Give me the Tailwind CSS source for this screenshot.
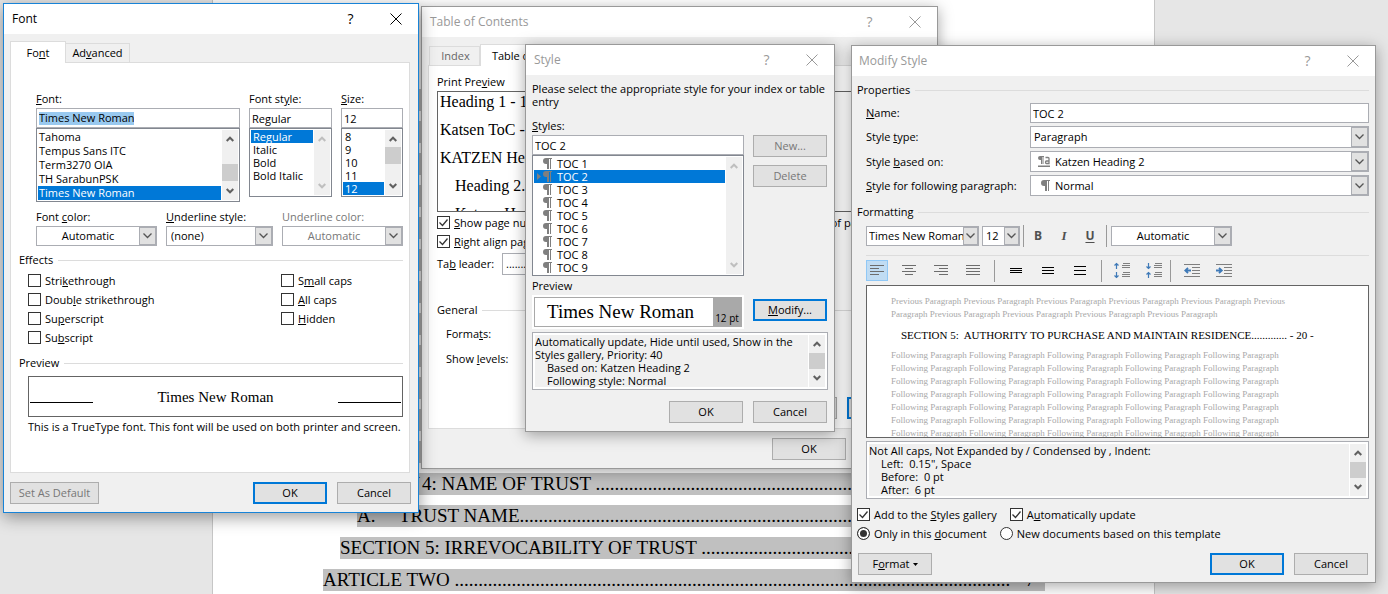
<!DOCTYPE html>
<html lang="en">
<head>
  <meta charset="UTF-8" />
  <meta name="viewport" content="width=device-width, initial-scale=1.0"/>
  <title>Table of Contents - Modify Style</title>
  <script src="https://cdn.jsdelivr.net/npm/@tailwindcss/browser@4"></script>
</head>
<body class="relative h-screen overflow-hidden bg-[#e6e6e6] font-['Open_Sans','Noto_Sans',sans-serif] text-[11px] leading-4 text-black">

  <!-- Shared icons -->
  <svg class="hidden">
    <symbol id="close" viewBox="0 0 12 12"><path d="M.5.5l11 11M11.5.5l-11 11" fill="none" stroke="currentColor"/></symbol>
    <symbol id="down" viewBox="0 0 9 6"><path d="M.5.5l4 4 4-4" fill="none" stroke="#555" stroke-width="1.3"/></symbol>
    <symbol id="sb-up" viewBox="0 0 8 6"><path d="M.7 5L4 1.700 7.300 5" fill="none" stroke="currentColor" stroke-width="2"/></symbol>
    <symbol id="sb-down" viewBox="0 0 8 6"><path d="M.7 1L4 4.300 7.300 1" fill="none" stroke="currentColor" stroke-width="2"/></symbol>
    <symbol id="check" viewBox="0 0 13 13"><path d="M2.500 6.500l3 3 5-6" fill="none" stroke="#333" stroke-width="1.300"/></symbol>
    <symbol id="para" viewBox="0 0 9 11"><path d="M3 0h6v1H8v10H7V1H6v10H4V6H3a3 3 0 0 1 0-6z" fill="#7f7f7f"/></symbol>
  </svg>

  <!-- Document -->
  <main class="ml-[212px] mr-[233px] h-screen overflow-hidden border-x border-[#c6c6c6] bg-white pl-[110px] pr-[109px] pt-[89px] font-['Liberation_Serif',serif] text-[19px] leading-[22px] whitespace-nowrap">
    <div class="flex flex-col gap-2.5 *:h-[22px] *:shrink-0 *:bg-[#c0c0c0]">
      <p></p><p></p><p></p><p></p><p></p><p></p><p></p><p></p><p></p><p></p><p></p><p></p>
      <p class="ml-[17px] flex"><span class="w-[82px]">SECTION</span><span>4: NAME OF TRUST .......................................................................................</span></p>
      <p class="ml-[34px] flex"><span class="w-[42px]">A.</span><span>TRUST NAME.......................................................................................................</span></p>
      <p class="ml-[17px]">SECTION 5: IRREVOCABILITY OF TRUST .................................................................</p>
      <p class="flex justify-between"><span>ARTICLE TWO .....................................................................................................................</span><span class="pr-2.5">7</span></p>
    </div>
  </main>

  <!-- Table of Contents dialog -->
  <section class="absolute left-[421px] top-[6px] w-[517px] border border-[#999] bg-[#f0f0f0] shadow-[0_3px_14px_rgba(0,0,0,0.35)]">
    <header class="flex h-[30px] items-center bg-white pl-2 text-xs text-[#999]">
      <h2 class="grow">Table of Contents</h2>
      <button class="w-[45px] text-sm">?</button>
      <button class="flex w-[45px] justify-center"><svg class="size-3"><use href="#close"/></svg></button>
    </header>
    <div class="px-1.5 pb-2 pt-[7px]">
      <div class="flex h-[21px] items-end">
        <button class="ml-px h-[19px] w-[51px] border border-b-0 border-[#dcdcdc] pl-0.5 text-[#666]">Index</button>
        <button class="relative -mb-px h-[22px] w-[114px] border border-b-0 border-[#dcdcdc] bg-white">Table of <u>C</u>ontents</button>
      </div>
      <div class="mr-0.5 border border-[#dcdcdc] bg-white pb-[9px] pl-2 pt-2">
        <div class="grid grid-cols-[248px_1fr] gap-x-2.5">
          <div>
            <p>Print Pre<u>v</u>iew</p>
            <div class="mt-px h-[121px] overflow-hidden border border-[#646464] pl-0.5 font-['Liberation_Serif',serif] text-base leading-7 whitespace-nowrap">
              <p class="-mt-1">Heading 1 - 1</p>
              <p>Katsen ToC - 1</p>
              <p>KATZEN Heading 1</p>
              <p class="pl-[15px]">Heading 2.......3</p>
              <p class="pl-[15px]">Katzen Heading 2</p>
            </div>
            <label class="mt-px flex h-[19px] items-center gap-1">
              <span class="grid"><input type="checkbox" checked class="col-start-1 row-start-1 size-[13px] appearance-none border border-[#333] bg-white"><svg class="col-start-1 row-start-1 size-[13px]"><use href="#check"/></svg></span>
              <span><u>S</u>how page numbers</span>
            </label>
            <label class="flex h-[19px] items-center gap-1">
              <span class="grid"><input type="checkbox" checked class="col-start-1 row-start-1 size-[13px] appearance-none border border-[#333] bg-white"><svg class="col-start-1 row-start-1 size-[13px]"><use href="#check"/></svg></span>
              <span><u>R</u>ight align page numbers</span>
            </label>
            <div class="mt-0.5 flex items-center">
              <label for="leader" class="w-[65px]">Ta<u>b</u> leader:</label>
              <select id="leader" class="h-[22px] w-[90px] appearance-none border border-[#abadb3] bg-white px-[3px]"><option>.......</option></select>
            </div>
          </div>
          <div>
            <p><u>W</u>eb Preview</p>
            <div class="mt-px h-[121px] border border-[#646464]"></div>
            <label class="mt-px flex h-[19px] items-center gap-1 whitespace-nowrap">
              <span class="grid"><input type="checkbox" checked class="col-start-1 row-start-1 size-[13px] appearance-none border border-[#333] bg-white"><svg class="col-start-1 row-start-1 size-[13px]"><use href="#check"/></svg></span>
              <span>Use <u>h</u>yperlinks instead of page numbers</span>
            </label>
          </div>
        </div>
        <div class="mt-[27px] flex items-center gap-[5px] pr-1.5"><h3>General</h3><hr class="grow border-[#dcdcdc]"></div>
        <p class="mt-2 pl-[9px]">Forma<u>t</u>s:</p>
        <p class="mt-[9px] pl-[9px]">Show <u>l</u>evels:</p>
        <div class="mt-[30px] flex justify-end gap-2.5 pr-[7px]">
          <button class="h-[22px] w-[74px] border border-[#adadad] bg-[#e1e1e1]"><u>O</u>ptions...</button>
          <button class="h-[22px] w-[74px] border-2 border-[#0078d7] bg-[#e1e1e1]"><u>M</u>odify...</button>
        </div>
      </div>
      <div class="mt-[9px] flex justify-end gap-2.5 pr-px">
        <button class="h-[22px] w-[74px] border border-[#adadad] bg-[#e1e1e1]">OK</button>
        <button class="h-[22px] w-[74px] border border-[#adadad] bg-[#e1e1e1]">Cancel</button>
      </div>
    </div>
  </section>

  <!-- Style dialog -->
  <section class="absolute left-[525px] top-[44px] w-[310px] border border-[#999] bg-[#f0f0f0] shadow-[0_3px_14px_rgba(0,0,0,0.35)]">
    <header class="flex h-[30px] items-center bg-white pl-2 text-xs text-[#999]">
      <h2 class="grow">Style</h2>
      <button class="w-[45px] text-sm">?</button>
      <button class="flex w-[45px] justify-center"><svg class="size-3"><use href="#close"/></svg></button>
    </header>
    <div class="px-1.5 pb-2 pt-[7px]">
      <p class="leading-[13px]">Please select the appropriate style for your index or table<br>entry</p>
      <label for="styles" class="mt-2.5 block"><u>S</u>tyles:</label>
      <div class="mt-px flex gap-[9px]">
        <div class="w-[212px]">
          <input id="styles" type="text" value="TOC 2" class="block h-5 w-full border border-[#abadb3] bg-white px-0.5">
          <div class="flex border border-[#828790] bg-white p-px leading-[13px]">
            <ul class="grow">
              <li class="flex items-center pl-[9px]"><svg class="mr-[5px] h-[11px] w-[9px]"><use href="#para"/></svg>TOC 1</li>
              <li class="flex items-center bg-[#0078d7] pl-[3px] text-white"><svg class="h-[7px] w-[6px]" viewBox="0 0 6 7"><path d="M0 0l4 3.500L0 7z" fill="#7f7f7f"/></svg><svg class="mr-[5px] h-[11px] w-[9px]"><use href="#para"/></svg>TOC 2</li>
              <li class="flex items-center pl-[9px]"><svg class="mr-[5px] h-[11px] w-[9px]"><use href="#para"/></svg>TOC 3</li>
              <li class="flex items-center pl-[9px]"><svg class="mr-[5px] h-[11px] w-[9px]"><use href="#para"/></svg>TOC 4</li>
              <li class="flex items-center pl-[9px]"><svg class="mr-[5px] h-[11px] w-[9px]"><use href="#para"/></svg>TOC 5</li>
              <li class="flex items-center pl-[9px]"><svg class="mr-[5px] h-[11px] w-[9px]"><use href="#para"/></svg>TOC 6</li>
              <li class="flex items-center pl-[9px]"><svg class="mr-[5px] h-[11px] w-[9px]"><use href="#para"/></svg>TOC 7</li>
              <li class="flex items-center pl-[9px]"><svg class="mr-[5px] h-[11px] w-[9px]"><use href="#para"/></svg>TOC 8</li>
              <li class="flex items-center pl-[9px]"><svg class="mr-[5px] h-[11px] w-[9px]"><use href="#para"/></svg>TOC 9</li>
            </ul>
            <div class="ml-px flex w-4 flex-col items-center justify-between bg-[#f0f0f0] py-1.5 text-[#bfbfbf]">
              <svg class="h-1.5 w-2"><use href="#sb-up"/></svg>
              <svg class="h-1.5 w-2"><use href="#sb-down"/></svg>
            </div>
          </div>
        </div>
        <div class="flex flex-col gap-2">
          <button disabled class="h-[22px] w-[74px] border border-[#adadad] bg-[#e1e1e1] text-[#777]">New...</button>
          <button disabled class="h-[22px] w-[74px] border border-[#adadad] bg-[#e1e1e1] text-[#777]">Delete</button>
        </div>
      </div>
      <p class="mt-0.5">Preview</p>
      <div class="mt-px flex items-center gap-[9px]">
        <div class="w-[212px] bg-white p-0.5">
          <div class="flex h-[30px] border border-[#a9a9a9]">
            <span class="grow pl-3 font-['Liberation_Serif',serif] text-[19px] leading-7">Times New Roman</span>
            <span class="w-7 bg-[#a9a9a9] pt-3 text-center text-[10px]">12 pt</span>
          </div>
        </div>
        <button class="mb-1 h-[22px] w-[74px] border-2 border-[#0078d7] bg-[#e1e1e1]"><u>M</u>odify...</button>
      </div>
      <div class="mt-[3px] flex border border-[#abadb3] bg-white p-0.5 leading-[13px]">
        <div class="h-[52px] grow bg-[#f0f0f0] whitespace-nowrap">
          <p>Automatically update, Hide until used, Show in the</p>
          <p>Styles gallery, Priority: 40</p>
          <p class="pl-3">Based on: Katzen Heading 2</p>
          <p class="pl-3">Following style: Normal</p>
        </div>
        <div class="ml-px flex w-4 flex-col items-center bg-[#f0f0f0] py-1.5 text-[#606060]">
          <svg class="h-1.5 w-2 shrink-0"><use href="#sb-up"/></svg>
          <div class="my-1.5 grow self-stretch bg-[#cdcdcd]"></div>
          <svg class="h-1.5 w-2 shrink-0"><use href="#sb-down"/></svg>
        </div>
      </div>
      <div class="mt-[11px] flex justify-end gap-2.5 pr-px">
        <button class="h-[22px] w-[74px] border border-[#adadad] bg-[#e1e1e1]">OK</button>
        <button class="h-[22px] w-[74px] border border-[#adadad] bg-[#e1e1e1]">Cancel</button>
      </div>
    </div>
  </section>

  <!-- Modify Style dialog -->
  <section class="absolute left-[851px] top-[45px] w-[525px] border border-[#999] bg-[#f0f0f0] shadow-[0_3px_14px_rgba(0,0,0,0.35)]">
    <header class="flex h-[30px] items-center bg-white pl-[7px] text-xs text-[#999]">
      <h2 class="grow">Modify Style</h2>
      <button class="w-[45px] text-sm">?</button>
      <button class="flex w-[45px] justify-center"><svg class="size-3"><use href="#close"/></svg></button>
    </header>
    <div class="pb-[7px] pl-[5px] pr-1.5 pt-1.5">
      <div class="flex items-center gap-[5px]"><h3>Properties</h3><hr class="grow border-[#dcdcdc]"></div>
      <div class="mt-[5px] grid grid-cols-[164px_1fr] items-center gap-y-[3px] pl-[9px]">
        <label for="name"><u>N</u>ame:</label>
        <input id="name" type="text" value="TOC 2" class="h-5 border border-[#abadb3] bg-white px-0.5">
        <label for="type">Style <u>t</u>ype:</label>
        <div class="flex h-[22px] border border-[#abadb3] bg-white">
          <select id="type" class="grow appearance-none px-[3px]"><option>Paragraph</option></select>
          <span class="flex w-[17px] items-center justify-center border border-[#abadb3] bg-[#e1e1e1]"><svg class="h-1.5 w-[9px]"><use href="#down"/></svg></span>
        </div>
        <label for="based">Style <u>b</u>ased on:</label>
        <div class="flex h-[21px] items-center border border-[#abadb3] bg-white pl-[7px]">
          <svg class="h-[11px] w-3" viewBox="0 0 12 11"><path d="M2 0h4v1H5.500v7h-1V1h-.500v7H3V4H2a2 2 0 0 1 0-4zM0 9.500h12V11H0z" fill="#7f7f7f"/><path d="M7.500 1.500h2.500q1 0 1 1V7.500H8.500q-1 0-1-1.200t1-1.300H11" fill="none" stroke="#7f7f7f" stroke-width="1.300"/></svg>
          <select id="based" class="h-full grow appearance-none pl-[5px]"><option>Katzen Heading 2</option></select>
          <span class="flex h-full w-[17px] items-center justify-center border border-[#abadb3] bg-[#e1e1e1]"><svg class="h-1.5 w-[9px]"><use href="#down"/></svg></span>
        </div>
        <label for="following"><u>S</u>tyle for following paragraph:</label>
        <div class="flex h-[21px] items-center border border-[#abadb3] bg-white pl-2.5">
          <svg class="h-[11px] w-[9px]"><use href="#para"/></svg>
          <select id="following" class="h-full grow appearance-none pl-[5px]"><option>Normal</option></select>
          <span class="flex h-full w-[17px] items-center justify-center border border-[#abadb3] bg-[#e1e1e1]"><svg class="h-1.5 w-[9px]"><use href="#down"/></svg></span>
        </div>
      </div>

      <div class="mt-2 flex items-center gap-[5px]"><h3>Formatting</h3><hr class="grow border-[#dcdcdc]"></div>
      <div class="mt-[5px] pl-[9px]">
        <div class="flex h-[22px] items-center">
          <div class="flex h-5 w-[113px] border border-[#abadb3] bg-white">
            <select aria-label="Font" class="w-0 grow appearance-none pl-0.5"><option>Times New Roman</option></select>
            <span class="flex w-[15px] shrink-0 items-center justify-center border border-[#abadb3] bg-[#e1e1e1]"><svg class="h-1.5 w-[9px]"><use href="#down"/></svg></span>
          </div>
          <div class="ml-[3px] flex h-5 w-[38px] border border-[#abadb3] bg-white">
            <select aria-label="Font size" class="w-0 grow appearance-none pl-[3px]"><option>12</option></select>
            <span class="flex w-[15px] shrink-0 items-center justify-center border border-[#abadb3] bg-[#e1e1e1]"><svg class="h-1.5 w-[9px]"><use href="#down"/></svg></span>
          </div>
          <div class="ml-[3px] h-full w-px bg-[#999]"></div>
          <div class="ml-px flex text-xs font-bold text-[#505050]">
            <button class="w-[26px]">B</button>
            <button class="w-[26px] font-['Liberation_Serif',serif] text-[13px] italic">I</button>
            <button class="w-[26px] underline underline-offset-2">U</button>
          </div>
          <div class="ml-[3px] h-full w-px bg-[#999]"></div>
          <div class="ml-1 flex h-5 w-[121px] border border-[#abadb3] bg-white">
            <select aria-label="Font color" class="grow appearance-none text-center"><option>Automatic</option></select>
            <span class="flex w-[17px] items-center justify-center border border-[#abadb3] bg-[#e1e1e1]"><svg class="h-1.5 w-[9px]"><use href="#down"/></svg></span>
          </div>
        </div>
        <hr class="mt-2 border-[#dcdcdc]">
        <div class="mt-1 flex h-[21px] items-center">
          <div class="flex gap-2.5">
            <button aria-label="Align left" class="flex h-[21px] w-[22px] items-center justify-center border border-[#90c8f6] bg-[#c0dcf3]"><svg class="h-[11px] w-[14px]" viewBox="0 0 14 11"><path d="M0 .5h14M0 3.500h9M0 6.500h14M0 9.500h9" stroke="#6d6d6d"/></svg></button>
            <button aria-label="Center" class="flex h-[21px] w-[22px] items-center justify-center"><svg class="h-[11px] w-[14px]" viewBox="0 0 14 11"><path d="M0 .5h14M3 3.500h8M0 6.500h14M3 9.500h8" stroke="#6d6d6d"/></svg></button>
            <button aria-label="Align right" class="flex h-[21px] w-[22px] items-center justify-center"><svg class="h-[11px] w-[14px]" viewBox="0 0 14 11"><path d="M0 .5h14M5 3.500h9M0 6.500h14M5 9.500h9" stroke="#6d6d6d"/></svg></button>
            <button aria-label="Justify" class="flex h-[21px] w-[22px] items-center justify-center"><svg class="h-[11px] w-[14px]" viewBox="0 0 14 11"><path d="M0 .5h14M0 3.500h14M0 6.500h14M0 9.500h14" stroke="#6d6d6d"/></svg></button>
          </div>
          <div class="ml-2.5 h-[22px] w-px bg-[#999]"></div>
          <div class="ml-2.5 flex gap-2.5">
            <button aria-label="Single spacing" class="flex h-[21px] w-[22px] items-center justify-center"><svg class="h-[11px] w-3" viewBox="0 0 12 11"><path d="M0 3.500h12M0 5.500h12M0 7.500h12" stroke="#000"/></svg></button>
            <button aria-label="1.5 spacing" class="flex h-[21px] w-[22px] items-center justify-center"><svg class="h-[11px] w-3" viewBox="0 0 12 11"><path d="M0 2.500h12M0 5.500h12M0 8.500h12" stroke="#000"/></svg></button>
            <button aria-label="Double spacing" class="flex h-[21px] w-[22px] items-center justify-center"><svg class="h-[11px] w-3" viewBox="0 0 12 11"><path d="M0 1.500h12M0 5.500h12M0 9.500h12" stroke="#000"/></svg></button>
          </div>
          <div class="ml-2.5 h-[22px] w-px bg-[#999]"></div>
          <div class="ml-[9px] flex gap-2.5">
            <button aria-label="Increase paragraph spacing" class="flex h-[21px] w-[22px] items-center justify-center"><svg class="h-[17px] w-4" viewBox="0 0 16 17"><path d="M9 1.500h7M8 3.500h8M8 5.500h8M9 10.500h7M8 12.500h8M8 14.500h8" stroke="#7f7f7f"/><path d="M2.500 7V1M.5 3.500l2-2 2 2M2.500 10v6M.5 13.500l2 2 2-2" fill="none" stroke="#3f7ab8" stroke-width="1.200"/></svg></button>
            <button aria-label="Decrease paragraph spacing" class="flex h-[21px] w-[22px] items-center justify-center"><svg class="h-[17px] w-4" viewBox="0 0 16 17"><path d="M9 1.500h7M8 3.500h8M8 5.500h8M9 10.500h7M8 12.500h8M8 14.500h8" stroke="#7f7f7f"/><path d="M2.500 1v6M.5 4.500l2 2 2-2M2.500 16v-6M.5 12.500l2-2 2 2" fill="none" stroke="#3f7ab8" stroke-width="1.200"/></svg></button>
          </div>
          <div class="ml-[5px] h-[22px] w-px bg-[#999]"></div>
          <div class="ml-2.5 flex gap-2.5">
            <button aria-label="Decrease indent" class="flex h-[21px] w-[22px] items-center justify-center"><svg class="h-[13px] w-4" viewBox="0 0 16 13"><path d="M0 .5h16M8 3.500h8M8 6.500h8M8 9.500h8M0 12.500h16" stroke="#7f7f7f"/><path d="M7 6.500H1.500M4 3.800L1.200 6.500 4 9.200" fill="none" stroke="#3f7ab8" stroke-width="1.800"/></svg></button>
            <button aria-label="Increase indent" class="flex h-[21px] w-[22px] items-center justify-center"><svg class="h-[13px] w-4" viewBox="0 0 16 13"><path d="M0 .5h16M8 3.500h8M8 6.500h8M8 9.500h8M0 12.500h16" stroke="#7f7f7f"/><path d="M0 6.500h5.500M3 3.800l2.800 2.700L3 9.200" fill="none" stroke="#3f7ab8" stroke-width="1.800"/></svg></button>
          </div>
        </div>

        <div class="mt-1 h-[153px] overflow-hidden border border-[#646464] bg-white pl-6 pt-[9px] font-['Liberation_Serif',serif] text-[9px] leading-[13px] whitespace-nowrap text-[#a8a8a8]">
          <p>Previous Paragraph Previous Paragraph Previous Paragraph Previous Paragraph Previous Paragraph Previous<br>Paragraph Previous Paragraph Previous Paragraph Previous Paragraph Previous Paragraph</p>
          <p class="mt-1.5 pl-2.5 text-[11px] leading-4 text-black">SECTION 5:&nbsp; AUTHORITY TO PURCHASE AND MAINTAIN RESIDENCE............. - 20 -</p>
          <p class="mt-1.5">Following Paragraph Following Paragraph Following Paragraph Following Paragraph Following Paragraph<br>Following Paragraph Following Paragraph Following Paragraph Following Paragraph Following Paragraph<br>Following Paragraph Following Paragraph Following Paragraph Following Paragraph Following Paragraph<br>Following Paragraph Following Paragraph Following Paragraph Following Paragraph Following Paragraph<br>Following Paragraph Following Paragraph Following Paragraph Following Paragraph Following Paragraph<br>Following Paragraph Following Paragraph Following Paragraph Following Paragraph Following Paragraph<br>Following Paragraph Following Paragraph Following Paragraph Following Paragraph Following Paragraph</p>
        </div>

        <div class="mt-[3px] flex border border-[#abadb3] bg-white p-0.5 leading-[13px]">
          <div class="h-[52px] grow bg-[#f0f0f0]">
            <p>Not All caps, Not Expanded by / Condensed by , Indent:</p>
            <p class="pl-3">Left:&nbsp; 0.15", Space</p>
            <p class="pl-3">Before:&nbsp; 0 pt</p>
            <p class="pl-3">After:&nbsp; 6 pt</p>
          </div>
          <div class="ml-px flex w-4 flex-col items-center bg-[#f0f0f0] py-1.5 text-[#606060]">
            <svg class="h-1.5 w-2 shrink-0"><use href="#sb-up"/></svg>
            <div class="my-1.5 grow self-stretch bg-[#cdcdcd]"></div>
            <svg class="h-1.5 w-2 shrink-0"><use href="#sb-down"/></svg>
          </div>
        </div>
      </div>

      <div class="mt-1.5 flex gap-[13px]">
        <label class="flex h-[19px] items-center gap-1">
          <span class="grid"><input type="checkbox" checked class="col-start-1 row-start-1 size-[13px] appearance-none border border-[#333] bg-white"><svg class="col-start-1 row-start-1 size-[13px]"><use href="#check"/></svg></span>
          <span>Add to the <u>S</u>tyles gallery</span>
        </label>
        <label class="flex h-[19px] items-center gap-1">
          <span class="grid"><input type="checkbox" checked class="col-start-1 row-start-1 size-[13px] appearance-none border border-[#333] bg-white"><svg class="col-start-1 row-start-1 size-[13px]"><use href="#check"/></svg></span>
          <span>A<u>u</u>tomatically update</span>
        </label>
      </div>
      <div class="flex gap-[13px]">
        <label class="flex h-[19px] items-center gap-1">
          <input type="radio" name="scope" checked class="size-[13px] appearance-none rounded-full border border-[#333] bg-white checked:bg-[#333] checked:shadow-[inset_0_0_0_2px_white]">
          <span>Only in this <u>d</u>ocument</span>
        </label>
        <label class="flex h-[19px] items-center gap-1">
          <input type="radio" name="scope" class="size-[13px] appearance-none rounded-full border border-[#333] bg-white checked:bg-[#333] checked:shadow-[inset_0_0_0_2px_white]">
          <span>New documents based on this template</span>
        </label>
      </div>
      <div class="mt-2.5 flex items-center gap-2.5 pl-px pr-px">
        <button class="mr-auto flex h-[22px] w-[74px] items-center justify-center gap-[3px] border border-[#adadad] bg-[#e1e1e1]"><span>F<u>o</u>rmat</span><svg class="h-[3px] w-[5px]" viewBox="0 0 5 3"><path d="M0 0h5L2.500 3z"/></svg></button>
        <button class="h-[22px] w-[74px] border-2 border-[#0078d7] bg-[#e1e1e1]">OK</button>
        <button class="h-[22px] w-[74px] border border-[#adadad] bg-[#e1e1e1]">Cancel</button>
      </div>
    </div>
  </section>

  <!-- Font dialog -->
  <section class="absolute left-[3px] top-[3px] w-[416px] border border-[#1883d7] bg-[#f0f0f0] shadow-[0_4px_16px_rgba(0,0,0,0.4)]">
    <header class="flex h-[30px] items-center bg-white pl-2 text-xs">
      <h2 class="grow">Font</h2>
      <button class="w-[45px] text-sm">?</button>
      <button class="flex w-[45px] justify-center"><svg class="size-3"><use href="#close"/></svg></button>
    </header>
    <div class="px-1.5 pb-2 pt-[7px]">
      <div class="flex h-[21px] items-end">
        <button class="relative -mb-px h-[22px] w-14 border border-b-0 border-[#dcdcdc] bg-white">Fo<u>n</u>t</button>
        <button class="h-[19px] w-16 border border-b-0 border-l-0 border-[#dcdcdc]">Ad<u>v</u>anced</button>
      </div>
      <div class="mr-0.5 border border-[#dcdcdc] bg-white pb-[37px] pl-2 pr-1.5 pt-7">
        <div class="pl-[17px]">
          <div class="flex items-start">
            <div class="w-[204px]">
              <label for="font" class="mb-px block"><u>F</u>ont:</label>
              <div class="flex h-5 items-center border border-[#abadb3] bg-white pl-0.5">
                <input id="font" type="text" value="Times New Roman" class="h-[13px] w-[95px] bg-[#99c9ef]">
              </div>
              <div class="flex border border-[#828790] bg-white p-px leading-[14px]">
                <ul class="grow">
                  <li class="pl-px">Tahoma</li>
                  <li class="pl-px">Tempus Sans ITC</li>
                  <li class="pl-px">Term3270 OIA</li>
                  <li class="pl-px">TH SarabunPSK</li>
                  <li class="bg-[#0078d7] pl-px text-white">Times New Roman</li>
                </ul>
                <div class="ml-px flex w-4 flex-col items-center bg-[#f0f0f0] py-1.5 text-[#606060]">
                  <svg class="h-1.5 w-2 shrink-0"><use href="#sb-up"/></svg>
                  <div class="mt-[22px] h-[17px] self-stretch bg-[#cdcdcd]"></div>
                  <svg class="mt-auto h-1.5 w-2 shrink-0"><use href="#sb-down"/></svg>
                </div>
              </div>
            </div>
            <div class="ml-[9px] w-[83px]">
              <label for="fstyle" class="mb-px block">Font st<u>y</u>le:</label>
              <input id="fstyle" type="text" value="Regular" class="block h-5 w-full border border-[#abadb3] bg-white px-0.5">
              <div class="flex border border-[#828790] bg-white p-px leading-[13px]">
                <ul class="h-[65px] grow whitespace-nowrap">
                  <li class="bg-[#0078d7] pl-0.5 text-white">Regular</li>
                  <li class="pl-0.5">Italic</li>
                  <li class="pl-0.5">Bold</li>
                  <li class="pl-0.5">Bold Italic</li>
                </ul>
                <div class="ml-px flex w-4 flex-col items-center justify-between bg-[#f0f0f0] py-1.5 text-[#bfbfbf]">
                  <svg class="h-1.5 w-2"><use href="#sb-up"/></svg>
                  <svg class="h-1.5 w-2"><use href="#sb-down"/></svg>
                </div>
              </div>
            </div>
            <div class="ml-[9px] grow">
              <label for="fsize" class="mb-px block"><u>S</u>ize:</label>
              <input id="fsize" type="text" value="12" class="block h-5 w-[62px] border border-[#abadb3] bg-white px-0.5">
              <div class="flex w-[62px] border border-[#828790] bg-white p-px leading-[13px]">
                <ul class="grow">
                  <li class="pl-0.5">8</li>
                  <li class="pl-0.5">9</li>
                  <li class="pl-0.5">10</li>
                  <li class="pl-0.5">11</li>
                  <li class="bg-[#0078d7] pl-0.5 text-white">12</li>
                </ul>
                <div class="ml-px flex w-4 flex-col items-center bg-[#f0f0f0] py-1.5 text-[#606060]">
                  <svg class="h-1.5 w-2 shrink-0"><use href="#sb-up"/></svg>
                  <div class="mt-[5px] h-[17px] self-stretch bg-[#cdcdcd]"></div>
                  <svg class="mt-auto h-1.5 w-2 shrink-0"><use href="#sb-down"/></svg>
                </div>
              </div>
            </div>
          </div>
          <div class="mt-[7px] flex justify-between">
            <div class="w-[121px]">
              <label for="fcolor" class="mb-px block">Font <u>c</u>olor:</label>
              <div class="flex h-5 border border-[#abadb3] bg-white">
                <select id="fcolor" class="grow appearance-none text-center"><option>Automatic</option></select>
                <span class="flex w-[17px] items-center justify-center border border-[#abadb3] bg-[#e1e1e1]"><svg class="h-1.5 w-[9px]"><use href="#down"/></svg></span>
              </div>
            </div>
            <div class="w-[107px]">
              <label for="ustyle" class="mb-px block"><u>U</u>nderline style:</label>
              <div class="flex h-5 border border-[#abadb3] bg-white">
                <select id="ustyle" class="grow appearance-none pl-1"><option>(none)</option></select>
                <span class="flex w-[17px] items-center justify-center border border-[#abadb3] bg-[#e1e1e1]"><svg class="h-1.5 w-[9px]"><use href="#down"/></svg></span>
              </div>
            </div>
            <div class="w-[121px] text-[#777]">
              <label for="ucolor" class="mb-px block">Underline color:</label>
              <div class="flex h-5 border border-[#abadb3] bg-white">
                <select id="ucolor" disabled class="grow appearance-none text-center opacity-100"><option>Automatic</option></select>
                <span class="flex w-[17px] items-center justify-center border border-[#abadb3] bg-[#e1e1e1]"><svg class="h-1.5 w-[9px]"><use href="#down"/></svg></span>
              </div>
            </div>
          </div>
        </div>

        <div class="mt-1.5 flex items-center gap-[5px]"><h3>Effects</h3><hr class="grow border-[#dcdcdc]"></div>
        <div class="mt-[3px] grid grid-cols-[253px_1fr] items-start pl-[9px]">
          <div class="flex flex-col">
            <label class="flex h-[19px] items-center gap-1"><input type="checkbox" class="size-[13px] appearance-none border border-[#333] bg-white"><span>Stri<u>k</u>ethrough</span></label>
            <label class="flex h-[19px] items-center gap-1"><input type="checkbox" class="size-[13px] appearance-none border border-[#333] bg-white"><span>Doub<u>l</u>e strikethrough</span></label>
            <label class="flex h-[19px] items-center gap-1"><input type="checkbox" class="size-[13px] appearance-none border border-[#333] bg-white"><span>Su<u>p</u>erscript</span></label>
            <label class="flex h-[19px] items-center gap-1"><input type="checkbox" class="size-[13px] appearance-none border border-[#333] bg-white"><span>Su<u>b</u>script</span></label>
          </div>
          <div class="flex flex-col">
            <label class="flex h-[19px] items-center gap-1"><input type="checkbox" class="size-[13px] appearance-none border border-[#333] bg-white"><span>S<u>m</u>all caps</span></label>
            <label class="flex h-[19px] items-center gap-1"><input type="checkbox" class="size-[13px] appearance-none border border-[#333] bg-white"><span><u>A</u>ll caps</span></label>
            <label class="flex h-[19px] items-center gap-1"><input type="checkbox" class="size-[13px] appearance-none border border-[#333] bg-white"><span><u>H</u>idden</span></label>
          </div>
        </div>

        <div class="mt-2 flex items-center gap-[5px]"><h3>Preview</h3><hr class="grow border-[#dcdcdc]"></div>
        <div class="ml-[9px] mt-[5px] flex h-[41px] items-center justify-between border border-[#646464] px-px font-['Liberation_Serif',serif] text-[15px]">
          <span class="mt-3 h-px w-[63px] bg-black"></span>
          <span>Times New Roman</span>
          <span class="mt-3 h-px w-[63px] bg-black"></span>
        </div>
        <p class="ml-[9px] mt-0.5 whitespace-nowrap">This is a TrueType font. This font will be used on both printer and screen.</p>
      </div>
      <div class="mt-[9px] flex gap-2.5 pr-px">
        <button disabled class="mr-auto h-[22px] w-[89px] border border-[#adadad] bg-[#e1e1e1] text-[#777]">Set As Default</button>
        <button class="h-[22px] w-[74px] border-2 border-[#0078d7] bg-[#e1e1e1]">OK</button>
        <button class="h-[22px] w-[74px] border border-[#adadad] bg-[#e1e1e1]">Cancel</button>
      </div>
    </div>
  </section>

</body>
</html>
